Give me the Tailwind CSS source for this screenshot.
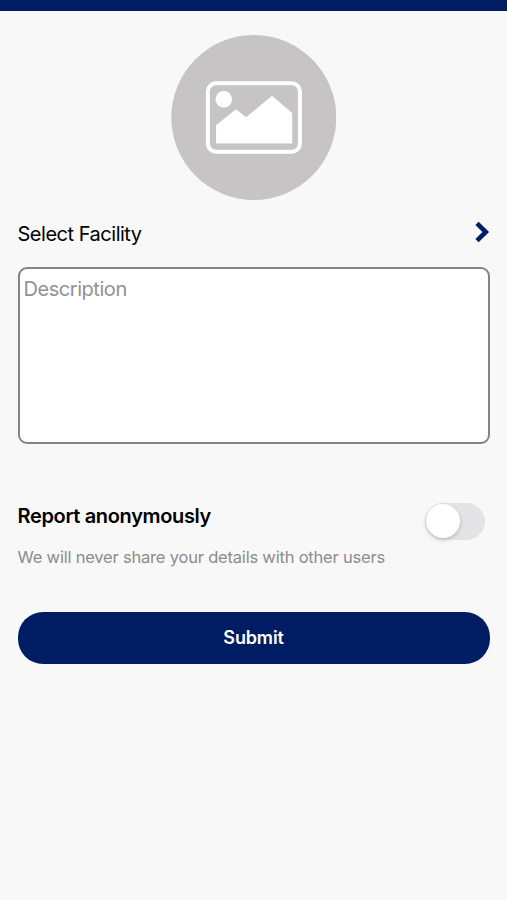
<!DOCTYPE html>
<html lang="en">
<head>
  <meta charset="UTF-8">
  <meta name="viewport" content="width=device-width, initial-scale=1">
  <title>Report</title>
  <script src="https://cdn.jsdelivr.net/npm/@tailwindcss/browser@4"></script>
</head>
<body class="min-h-screen bg-[#f8f8f8] font-['Inter',sans-serif] text-black">
  <!-- Header bar -->
  <header class="h-[11px] bg-[#001d64]"></header>

  <main class="flex flex-col px-[17.5px]">
    <!-- Photo picker -->
    <button class="mt-6 self-center" aria-label="Add photo">
      <svg class="block w-[165px] h-[165px]" viewBox="0 0 165 165" fill="none">
        <circle cx="82.8" cy="82.5" r="82.5" fill="#c6c4c5"/>
        <rect x="36.9" y="48.2" width="92" height="68.6" rx="8" stroke="#fff" stroke-width="4"/>
        <circle cx="52.8" cy="64.3" r="8.3" fill="#fff"/>
        <path d="M45 90.3 65 74.3 75.2 82.3 101 60.7 121.2 78V108.5H45Z" fill="#fff"/>
      </svg>
    </button>

    <!-- Facility -->
    <button class="mt-[18px] flex h-8 items-center justify-between text-left">
      <span class="text-[20px] tracking-[-0.48px]">Select Facility</span>
      <svg class="mb-1 w-[15px] h-[22px]" viewBox="0 0 15 22" fill="none">
        <path d="M2 2.3 10.8 11 2 19.7" stroke="#001d64" stroke-width="4.6"/>
      </svg>
    </button>

    <textarea class="mt-[16.5px] block h-[177px] w-full resize-none rounded-[9px] border-2 border-[#848484] bg-white px-1 py-[5px] text-[20px] leading-[30px] tracking-[-0.45px] placeholder:text-[#929292]" placeholder="Description"></textarea>

    <!-- Anonymous switch -->
    <div class="mt-[58px] flex h-[68px] justify-between">
      <div>
        <h2 class="text-[20px] leading-7 font-semibold tracking-[-0.35px]">Report anonymously</h2>
        <p class="mt-[15px] text-[16.5px] leading-6 tracking-[-0.2px] text-[#8c8c8c]">We will never share your details with other users</p>
      </div>
      <div class="mt-px mr-[5px] flex h-[37px] w-[60px] items-center rounded-full bg-[#e4e4e6] px-[1.5px]">
        <div class="h-[33.5px] w-[33.5px] rounded-full bg-white shadow-[0_2px_5px_rgba(0,0,0,0.18)]"></div>
      </div>
    </div>

    <button class="mt-[42px] h-[52px] w-full rounded-[25px] bg-[#001d64] text-[18px] font-semibold tracking-[-0.15px] text-white">Submit</button>
  </main>
</body>
</html>
